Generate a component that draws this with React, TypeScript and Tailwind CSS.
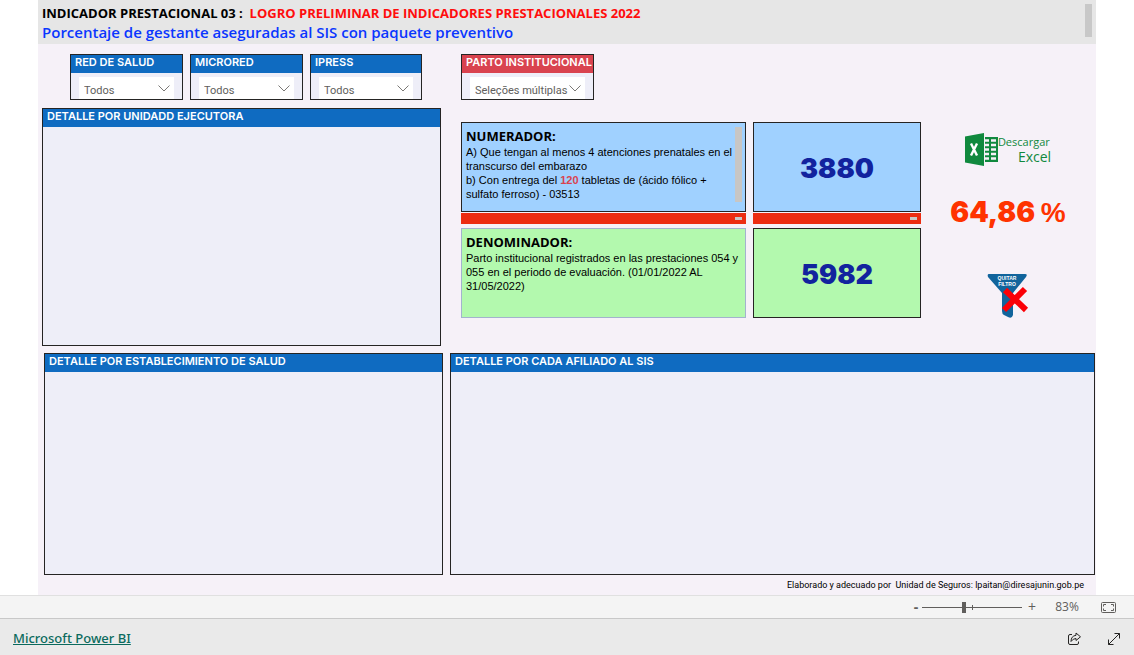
import { useState, type ReactNode } from "react";
import { clsx } from "clsx";

interface SlicerProps {
  id: string;
  label: string;
  options: string[];
  tone?: "blue" | "red";
  className?: string;
}

function Slicer({ id, label, options, tone = "blue", className }: SlicerProps) {
  return (
    <div
      className={clsx(
        "flex h-[46px] flex-col border border-[#252423] bg-[#eeeef8]",
        className
      )}
    >
      <label
        htmlFor={id}
        className={clsx(
          "h-[18px] shrink-0 whitespace-nowrap px-1 font-[Inter,sans-serif] text-[11px] leading-[15px] font-semibold text-white",
          tone === "blue" ? "bg-[#0f6bc1]" : "bg-[#d9434f]"
        )}
      >
        {label}
      </label>
      <div className="relative mx-2 mt-1 min-h-0 flex-1 bg-white">
        <select
          id={id}
          className="h-full w-full appearance-none bg-transparent pt-[2px] pl-[5px] font-[Roboto,sans-serif] text-[11px] text-[#605e5c] outline-none"
        >
          {options.map((option) => (
            <option key={option}>{option}</option>
          ))}
        </select>
        <svg
          viewBox="0 0 12 7"
          className="pointer-events-none absolute top-2 right-1 h-[7px] w-3"
          fill="none"
          stroke="#7a7875"
          strokeWidth="1"
        >
          <path d="M0.5 0.5L6 6L11.5 0.5" />
        </svg>
      </div>
    </div>
  );
}

function Panel({ title, className }: { title: string; className?: string }) {
  return (
    <section className={clsx("border border-[#252423] bg-[#eeeef8]", className)}>
      <h2 className="h-[18px] bg-[#0f6bc1] px-1 font-[Inter,sans-serif] text-[11px] leading-[15px] font-semibold text-white">
        {title}
      </h2>
    </section>
  );
}

function Formula({
  title,
  className,
  children,
}: {
  title: string;
  className: string;
  children: ReactNode;
}) {
  return (
    <div className={clsx("flex h-[90px] border pt-1 pl-1", className)}>
      <div className="flex-1 text-[11px] leading-[14px] whitespace-nowrap text-black">
        <h3 className="font-['Open_Sans',sans-serif] text-[13px] leading-[18px] font-bold">
          {title}
        </h3>
        {children}
      </div>
    </div>
  );
}

function Value({ className, children }: { className: string; children: ReactNode }) {
  return (
    <div
      className={clsx(
        "flex h-[90px] items-center justify-center border border-[#252423] pt-1 font-[Inter,sans-serif] text-[27px] font-black text-[#12239e]",
        className
      )}
    >
      {children}
    </div>
  );
}

function Divider() {
  return (
    <div className="flex h-[11px] items-center justify-end bg-[#ec2c11] pr-1">
      <span className="h-[3px] w-[7px] bg-[#c8c6c4]" />
    </div>
  );
}

function ExcelButton() {
  return (
    <button className="flex items-start text-[#10893e]" type="button">
      <svg viewBox="0 0 33 33" className="h-[33px] w-[33px]">
        <path d="M0 3.5L19 0V33L0 29.5Z" fill="#10893e" />
        <path d="M19 4H33V29H19Z" fill="#10893e" />
        <path
          d="M20 7.5H24M20 12H24M20 16.5H24M20 21H24M20 25.5H24M26 7.5H31M26 12H31M26 16.5H31M26 21H31M26 25.5H31"
          stroke="#f6f1f8"
          strokeWidth="2.4"
        />
        <path d="M19.5 3V30" stroke="#f6f1f8" />
        <path d="M6 10.5L12 22.5M12 10.5L6 22.5" stroke="#fff" strokeWidth="2.4" />
      </svg>
      <span className="flex flex-col pt-[2px] text-left font-['Open_Sans',sans-serif]">
        <span className="text-[11px] leading-[14px]">Descargar</span>
        <span className="pl-5 text-[14px] leading-[16px]">Excel</span>
      </span>
    </button>
  );
}

function ClearFilterButton() {
  return (
    <button type="button" aria-label="Quitar filtro">
      <svg viewBox="0 0 42 46" className="h-[46px] w-[42px]">
        <path
          d="M2 1H38Q41 1 39 4L26 20V42Q25 46 21 44L17 42Q15 41 15 38V20L1 4Q0 1 2 1Z"
          fill="#11649c"
        />
        <g
          fill="#fff"
          fontFamily="Liberation Sans, sans-serif"
          fontSize="5"
          fontWeight="bold"
          textAnchor="middle"
        >
          <text x="20" y="7">QUITAR</text>
          <text x="20" y="13">FILTRO</text>
        </g>
        <path d="M18 17L39 37M38 16L17 37" stroke="#fb0007" strokeWidth="6" />
      </svg>
    </button>
  );
}

function ZoomBar() {
  const [zoom, setZoom] = useState(83);

  return (
    <div className="flex h-6 items-center justify-end border-y border-t-[#e0e0e0] border-b-[#c8c8c8] bg-[#f4f4f4] pr-[18px] font-['Open_Sans',sans-serif] text-[#605e5c]">
      <button
        type="button"
        aria-label="Reducir"
        className="w-3 text-[14px] leading-5 font-bold"
        onClick={() => setZoom(Math.max(10, zoom - 10))}
      >
        -
      </button>
      <div className="relative flex h-5 w-[100px] items-center">
        <span className="absolute left-[50px] h-[5px] w-px bg-[#605e5c]" />
        <input
          type="range"
          aria-label="Zoom"
          min={0}
          max={200}
          value={zoom}
          onChange={(e) => setZoom(Number(e.target.value))}
          className="h-3 w-full appearance-none bg-[linear-gradient(#605e5c,#605e5c)] bg-[length:100%_1px] bg-center bg-no-repeat [&::-webkit-slider-thumb]:h-[11px] [&::-webkit-slider-thumb]:w-1 [&::-webkit-slider-thumb]:appearance-none [&::-webkit-slider-thumb]:bg-[#605e5c]"
        />
      </div>
      <button
        type="button"
        aria-label="Ampliar"
        className="w-5 text-[14px] leading-5"
        onClick={() => setZoom(Math.min(200, zoom + 10))}
      >
        +
      </button>
      <span className="w-[50px] text-center text-[12px]">{zoom}%</span>
      <button type="button" aria-label="Ajustar a la página" className="ml-[9px]">
        <svg viewBox="0 0 15 11" className="h-[11px] w-[15px]" fill="none" stroke="#605e5c">
          <rect x="0.5" y="0.5" width="14" height="10" rx="1" />
          <path d="M5 2.5H2.5V4.5M2.5 6.5V8.5H5M10 2.5H12.5V4.5M12.5 6.5V8.5H10" />
        </svg>
      </button>
    </div>
  );
}

export default function App() {
  return (
    <div className="flex min-h-screen flex-col bg-white font-['Liberation_Sans',sans-serif]">
      <main className="mx-[38px] flex flex-1 flex-col bg-[#f6f1f8]">
        <header className="flex h-11 justify-between bg-[#e6e6e6] pt-1 pr-1 pl-1 font-['Open_Sans',sans-serif]">
          <div>
            <h1 className="text-[13px] leading-[18px] font-bold whitespace-pre text-black">
              INDICADOR PRESTACIONAL 03 :{"  "}
              <span className="text-[#ff0d0d]">
                LOGRO PRELIMINAR DE INDICADORES PRESTACIONALES 2022
              </span>
            </h1>
            <p className="text-[15px] leading-5 font-semibold text-[#0a36ff]">
              Porcentaje de gestante aseguradas al SIS con paquete preventivo
            </p>
          </div>
          <span className="h-[33px] w-[7px] bg-[#c8c8c8]" />
        </header>

        <div className="flex gap-5 pt-[10px] pl-1">
          <div className="flex w-[399px] shrink-0 flex-col gap-2">
            <div className="flex gap-[7px] pl-7">
              <Slicer id="red" label="RED DE SALUD" options={["Todos"]} className="w-[113px]" />
              <Slicer id="microred" label="MICRORED" options={["Todos"]} className="w-[113px]" />
              <Slicer id="ipress" label="IPRESS" options={["Todos"]} className="w-[112px]" />
            </div>
            <Panel title="DETALLE POR UNIDADD EJECUTORA" className="h-[238px]" />
          </div>

          <div className="flex flex-1 flex-col gap-[22px]">
            <Slicer
              id="parto"
              label="PARTO INSTITUCIONAL"
              options={["Seleções múltiplas"]}
              tone="red"
              className="w-[133px]"
            />
            <div className="flex gap-[7px]">
              <div className="flex w-[285px] flex-col">
                <Formula title="NUMERADOR:" className="border-[#252423] bg-[#a0d1ff]">
                  <div className="flex justify-between">
                    <p>
                      A) Que tengan al menos 4 atenciones prenatales en el
                      <br />
                      transcurso del embarazo
                      <br />
                      b) Con entrega del <b className="text-[#d9434f]">120</b> tabletas de (ácido
                      fólico +
                      <br />
                      sulfato ferroso) - 03513
                    </p>
                    <span className="-mt-[18px] mr-[3px] h-[75px] w-[7px] bg-[#c8c6c4]" />
                  </div>
                </Formula>
                <div className="pt-px pb-1">
                  <Divider />
                </div>
                <Formula title="DENOMINADOR:" className="border-[#a3b3ce] bg-[#b3f9ae]">
                  <p>
                    Parto institucional registrados en las prestaciones 054 y
                    <br />
                    055 en el periodo de evaluación. (01/01/2022 AL
                    <br />
                    31/05/2022)
                  </p>
                </Formula>
              </div>
              <div className="flex w-[168px] flex-col">
                <Value className="bg-[#a0d1ff]">3880</Value>
                <div className="pt-px pb-1">
                  <Divider />
                </div>
                <Value className="bg-[#b3f9ae]">5982</Value>
              </div>
              <div className="flex flex-1 flex-col items-center pt-[11px] pr-2">
                <ExcelButton />
                <p className="pt-[26px] font-[Inter,sans-serif] text-[28px] leading-10 font-black text-[#ff3300]">
                  64,86{" "}
                  <span className="font-['Liberation_Sans',sans-serif] font-bold">%</span>
                </p>
                <div className="pt-10">
                  <ClearFilterButton />
                </div>
              </div>
            </div>
          </div>
        </div>

        <div className="flex flex-1 gap-[7px] pt-[7px] pr-px pl-[6px]">
          <Panel title="DETALLE POR ESTABLECIMIENTO DE SALUD" className="w-[399px] shrink-0" />
          <Panel title="DETALLE POR CADA AFILIADO AL SIS" className="flex-1" />
        </div>

        <p className="h-5 pr-3 text-right font-[Roboto,sans-serif] text-[9px] leading-5 whitespace-pre text-black">
          Elaborado y adecuado por{"  "}Unidad de Seguros: lpaitan@diresajunin.gob.pe
        </p>
      </main>

      <ZoomBar />

      <footer className="flex h-9 items-center justify-between bg-[#eaeaea] pr-[13px] pl-[13px]">
        <a
          href="#"
          className="pt-1 font-['Noto_Sans',sans-serif] text-[13px] font-medium text-[#0b6a5d] underline"
        >
          Microsoft Power BI
        </a>
        <div className="flex items-center gap-[26px] pt-1">
          <button type="button" aria-label="Compartir">
            <svg
              viewBox="0 0 14 14"
              className="h-[14px] w-[14px]"
              fill="none"
              stroke="#252423"
              strokeLinejoin="round"
            >
              <path d="M5 2.5H3Q1.5 2.5 1.5 4V11Q1.5 12.5 3 12.5H10Q11.5 12.5 11.5 11V9.5" />
              <path d="M9 1L13.5 4.8L9 8.5V6.5Q6 6.5 4 9.5Q4 4 9 3.3Z" />
            </svg>
          </button>
          <button type="button" aria-label="Pantalla completa">
            <svg viewBox="0 0 14 14" className="h-[14px] w-[14px]" fill="none" stroke="#252423">
              <path d="M1.5 12.5L12.5 1.5M7.5 1.5H12.5V6.5M1.5 7.5V12.5H6.5" />
            </svg>
          </button>
        </div>
      </footer>
    </div>
  );
}
